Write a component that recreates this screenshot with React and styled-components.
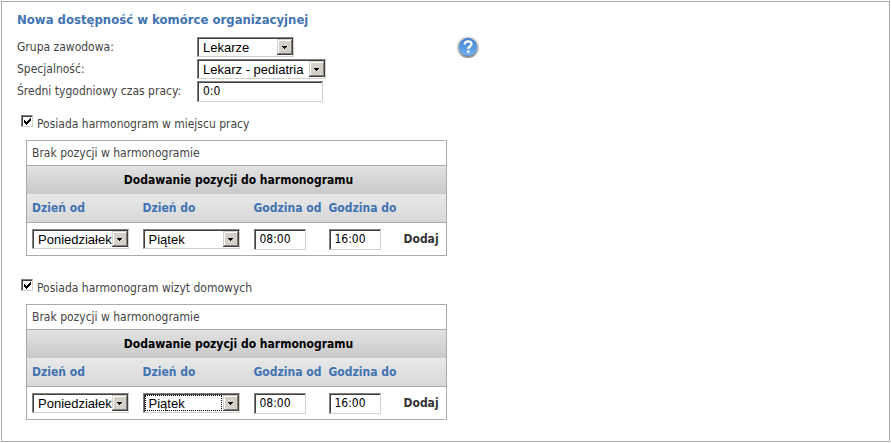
import React from 'react';
import styled, { createGlobalStyle, css } from 'styled-components';

const GlobalStyle = createGlobalStyle`
  * {
    box-sizing: border-box;
  }

  body {
    margin: 0;
    background-color: #fff;
    color: #444;
    font-family: "DejaVu Sans Condensed", Tahoma, sans-serif;
    font-size: 12px;
    line-height: 16px;
  }
`;

const sunken = css`
  border: 1px solid;
  border-color: #808080 #d4d0c8 #d4d0c8 #808080;
  border-radius: 0;
  box-shadow: inset 1px 1px #404040;
  background-color: #fff;
`;

const Panel = styled.main`
  margin: 1px;
  padding: 10px 15px 21px;
  border: 1px solid #aaa;
`;

const Title = styled.h1`
  margin: 0 0 8px;
  color: #3f73b3;
  font-size: 13px;
  line-height: 16px;
  font-weight: 700;
`;

const Top = styled.div`
  display: flex;
  align-items: flex-start;
  gap: 131px;
`;

const Fields = styled.div`
  display: grid;
  grid-template-columns: 180px 129px;
  grid-auto-rows: 22px;
  align-items: center;
  justify-items: start;
`;

const SelectBox = styled.span`
  display: inline-grid;
  grid-template-columns: 1fr 17px;
  align-items: center;
  width: ${({ $width }) => $width}px;
  height: 20px;
  position: relative;

  select {
    ${sunken}
    grid-area: 1 / 1 / 2 / 3;
    width: 100%;
    height: 20px;
    margin: 0;
    padding: 2px 0 0 5px;
    appearance: none;
    outline: none;
    color: #000;
    font-family: "Liberation Sans", Arial, sans-serif;
    font-size: 13px;
    line-height: 16px;
  }

  svg {
    grid-area: 1 / 2 / 2 / 3;
    width: 16px;
    height: 16px;
    pointer-events: none;
    z-index: 1;
  }

  &::before {
    content: "";
    display: ${({ $focused }) => ($focused ? 'block' : 'none')};
    position: absolute;
    inset: 2px 18px 2px 2px;
    border: 1px dotted #000;
    pointer-events: none;
    z-index: 1;
  }
`;

const TextInput = styled.input`
  ${sunken}
  width: ${({ $width }) => $width}px;
  height: 21px;
  margin: 0;
  padding: 0 5px;
  color: #000;
  font-family: inherit;
  font-size: 12px;
  line-height: 16px;
`;

const HelpButton = styled.button`
  width: 22px;
  height: 22px;
  padding: 0;
  border: 0;
  background: none;
  cursor: pointer;

  svg {
    display: block;
  }
`;

const Schedule = styled.section`
  display: flex;
  flex-direction: column;
  align-items: flex-start;
  gap: 8px;
  margin-top: ${({ $gap }) => $gap}px;
`;

const CheckLabel = styled.label`
  display: flex;
  align-items: flex-start;
  gap: 4px;
  padding-left: 4px;

  span {
    padding-top: 1px;
  }
`;

const CheckBox = styled.span`
  display: inline-grid;

  && {
    padding: 0;
  }

  input,
  svg {
    grid-area: 1 / 1;
    width: 12px;
    height: 12px;
    margin: 0;
  }

  input {
    ${sunken}
    appearance: none;
  }

  svg {
    pointer-events: none;
    visibility: hidden;
  }

  input:checked + svg {
    visibility: visible;
  }
`;

const Table = styled.table`
  width: 421px;
  margin-left: 9px;
  table-layout: fixed;
  border-collapse: collapse;
  border: 1px solid #aaa;

  th,
  td {
    padding: 0 0 0 5px;
    text-align: left;
  }
`;

const EmptyRow = styled.tr`
  height: 25px;
  border-bottom: 1px solid #aaa;
`;

const CaptionRow = styled.tr`
  height: 28px;
  background: linear-gradient(#e2e2e2, #c9c9c9);

  && th {
    padding: 0 0 0 4px;
    color: #000;
    text-align: center;
  }
`;

const HeadRow = styled.tr`
  height: 29px;
  background: linear-gradient(#e8e8e8, #d8d8d8);
  border-bottom: 1px solid #aaa;

  th {
    color: #3f73b3;
    white-space: nowrap;
  }
`;

const FormRow = styled.tr`
  height: 33px;

  td {
    vertical-align: middle;
  }

  td > * {
    vertical-align: middle;
  }
`;

const AddButton = styled.button`
  padding: 0;
  border: 0;
  background: none;
  color: #333;
  font: inherit;
  font-weight: 700;
  cursor: pointer;
`;

const days = ['Poniedziałek', 'Wtorek', 'Środa', 'Czwartek', 'Piątek', 'Sobota', 'Niedziela'];

function Select({ options, width, focused, ...rest }) {
  return (
    <SelectBox $width={width} $focused={focused}>
      <select {...rest}>
        {options.map((option) => (
          <option key={option}>{option}</option>
        ))}
      </select>
      <svg viewBox="0 0 16 16" shapeRendering="crispEdges" aria-hidden="true">
        <path fill="#d4d0c8" d="M0 0h16v16H0z" />
        <path fill="#fff" d="M1 1h13v1H2v12H1z" />
        <path fill="#808080" d="M14 1h1v14H1v-1h13z" />
        <path fill="#404040" d="M15 0h1v16H0v-1h15z" />
        <path fill="#000" d="M5 7h5v1H9v1H8v1H7V9H6V8H5z" />
      </svg>
    </SelectBox>
  );
}

function HelpIcon() {
  return (
    <svg width="22" height="22" viewBox="0 0 22 22" aria-hidden="true">
      <defs>
        <linearGradient id="ring" x1="0" y1="0" x2="0" y2="1">
          <stop offset="0" stopColor="#e8e8e8" />
          <stop offset="0.6" stopColor="#c4c4c4" />
          <stop offset="1" stopColor="#8c8c8c" />
        </linearGradient>
        <linearGradient id="disc" x1="0" y1="0" x2="0" y2="1">
          <stop offset="0" stopColor="#3f80d0" />
          <stop offset="1" stopColor="#6fb2f3" />
        </linearGradient>
      </defs>
      <circle cx="11" cy="11" r="11" fill="url(#ring)" />
      <circle cx="11" cy="11" r="9" fill="url(#disc)" stroke="#4a80c0" strokeWidth="0.5" />
      <path
        d="M7.600 8.500C7.800 6.300 9.200 5.300 11.100 5.300c2 0 3.400 1 3.400 2.700 0 2.300-3.200 2.300-3.200 4.900"
        fill="none"
        stroke="#fff"
        strokeWidth="2.300"
      />
      <path d="M10 14.300h2.600v2.500H10z" fill="#fff" />
    </svg>
  );
}

function SchedulePanel({ id, label, gap, focused }) {
  return (
    <Schedule $gap={gap}>
      <CheckLabel>
        <CheckBox>
          <input type="checkbox" defaultChecked />
          <svg viewBox="0 0 12 12" shapeRendering="crispEdges" aria-hidden="true">
            <path d="M3 5h1v1h1v1h1V6h1V5h1V4h1V3h1v3H9v1H8v1H7v1H6v1H5V9H4V8H3z" />
          </svg>
        </CheckBox>
        <span>{label}</span>
      </CheckLabel>
      <Table>
        <colgroup>
          <col width="111" />
          <col width="111" />
          <col width="75" />
          <col width="75" />
          <col />
        </colgroup>
        <tbody>
          <EmptyRow>
            <td colSpan={5}>Brak pozycji w harmonogramie</td>
          </EmptyRow>
          <CaptionRow>
            <th colSpan={5}>Dodawanie pozycji do harmonogramu</th>
          </CaptionRow>
          <HeadRow>
            <th><label htmlFor={`${id}-day-from`}>Dzień od</label></th>
            <th><label htmlFor={`${id}-day-to`}>Dzień do</label></th>
            <th><label htmlFor={`${id}-hour-from`}>Godzina od</label></th>
            <th><label htmlFor={`${id}-hour-to`}>Godzina do</label></th>
            <th />
          </HeadRow>
          <FormRow>
            <td><Select id={`${id}-day-from`} width={97} options={days} defaultValue="Poniedziałek" /></td>
            <td><Select id={`${id}-day-to`} width={97} options={days} defaultValue="Piątek" focused={focused} /></td>
            <td><TextInput id={`${id}-hour-from`} $width={52} defaultValue="08:00" /></td>
            <td><TextInput id={`${id}-hour-to`} $width={52} defaultValue="16:00" /></td>
            <td><AddButton type="button">Dodaj</AddButton></td>
          </FormRow>
        </tbody>
      </Table>
    </Schedule>
  );
}

function App() {
  return (
    <>
      <GlobalStyle />
      <Panel>
        <Title>Nowa dostępność w komórce organizacyjnej</Title>
        <Top>
          <Fields>
            <label htmlFor="group">Grupa zawodowa:</label>
            <Select id="group" width={97} options={['Lekarze']} />
            <label htmlFor="speciality">Specjalność:</label>
            <Select id="speciality" width={129} options={['Lekarz - pediatria']} />
            <label htmlFor="hours">Średni tygodniowy czas pracy:</label>
            <TextInput id="hours" $width={126} defaultValue="0:0" />
          </Fields>
          <HelpButton type="button" aria-label="Pomoc">
            <HelpIcon />
          </HelpButton>
        </Top>
        <SchedulePanel id="work" label="Posiada harmonogram w miejscu pracy" gap={13} />
        <SchedulePanel id="home" label="Posiada harmonogram wizyt domowych" gap={23} focused />
      </Panel>
    </>
  );
}

export default App;
